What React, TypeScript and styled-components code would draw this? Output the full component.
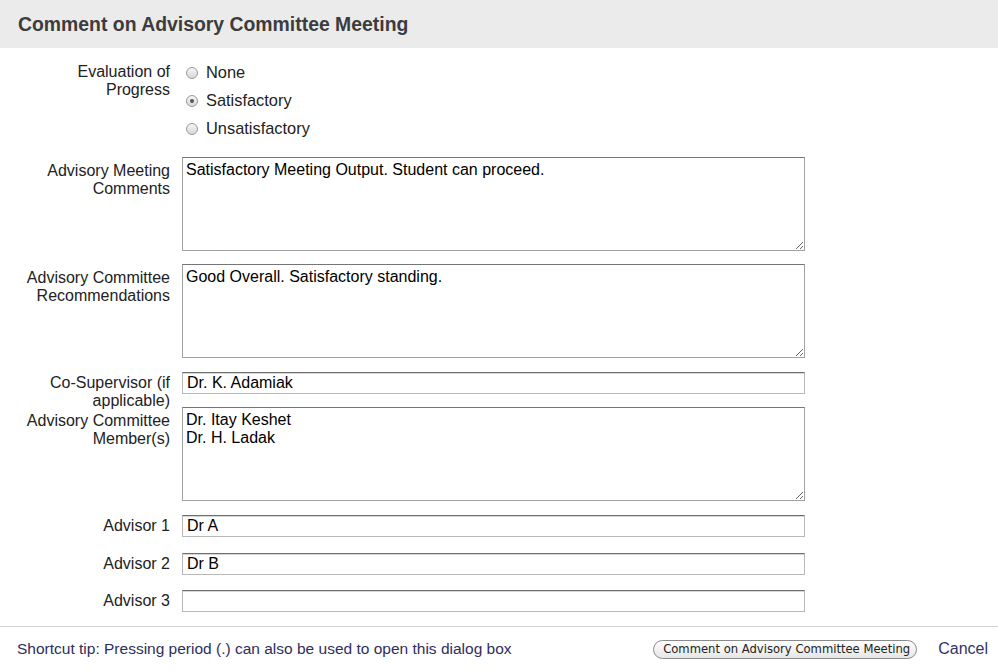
import React from 'react';
import styled, { createGlobalStyle } from 'styled-components';

const GlobalStyle = createGlobalStyle`
  html, body {
    margin: 0;
    padding: 0;
    background: #ffffff;
  }
  body {
    font-family: "Liberation Sans", Arial, Helvetica, sans-serif;
    color: #222;
  }
`;

const Dialog = styled.div`
  width: 998px;
  height: 671px;
  display: flex;
  flex-direction: column;
  background: #fff;
`;

const Header = styled.div`
  height: 48px;
  background: #ebebeb;
  display: flex;
  align-items: center;
  padding-left: 18px;
  flex-shrink: 0;
`;

const Title = styled.h2`
  margin: 0;
  font-size: 19.4px;
  font-weight: bold;
  color: #3c3c3c;
`;

const Form = styled.div`
  flex: 1;
  display: flex;
  flex-direction: column;
  gap: 14px;
  padding-top: 15px;
  padding-left: 20px;
`;

const Row = styled.div<{ $after?: number }>`
  display: grid;
  grid-template-columns: 150px 623px;
  column-gap: 12px;
  align-items: start;
  margin-bottom: ${p => p.$after ?? 0}px;
`;

const Label = styled.label<{ $top?: number; $spill?: number }>`
  text-align: right;
  font-size: 16px;
  line-height: 18px;
  color: #222;
  padding-top: ${p => p.$top ?? 0}px;
  margin-bottom: ${p => -(p.$spill ?? 0)}px;
`;

const RadioGroup = styled.div`
  display: flex;
  flex-direction: column;
  gap: 10px;
`;

const RadioOption = styled.label`
  display: flex;
  align-items: center;
  font-size: 16.4px;
  line-height: 18px;
  color: #222;
`;

const RadioDot = styled.span<{ $checked?: boolean }>`
  width: 10px;
  height: 10px;
  border-radius: 50%;
  border: 1px solid #9a9a9a;
  background: linear-gradient(#f4f4f4, #d8d8d8);
  margin: 2px 8px 0 4px;
  display: flex;
  align-items: center;
  justify-content: center;

  &::after {
    content: '';
    display: ${p => (p.$checked ? 'block' : 'none')};
    width: 4px;
    height: 4px;
    border-radius: 50%;
    background: #555;
  }
`;

const TextArea = styled.textarea`
  box-sizing: border-box;
  width: 623px;
  height: 94px;
  margin: 0;
  padding: 3px;
  border: 1px solid #a2a2a2;
  border-top-color: #757575;
  font-family: "Liberation Sans", Arial, Helvetica, sans-serif;
  font-size: 16px;
  line-height: 18px;
  color: #000;
  background: #fff;
  outline: none;
`;

const TextInput = styled.input`
  box-sizing: border-box;
  width: 623px;
  height: 22px;
  margin: 0;
  padding: 0 4px;
  border: 1px solid #b8b8b8;
  border-top-color: #6f6f6f;
  box-shadow: inset 0 1px 0 #d6d6d6;
  font-family: "Liberation Sans", Arial, Helvetica, sans-serif;
  font-size: 16px;
  color: #000;
  background: #fff;
  outline: none;
`;

const Footer = styled.div`
  height: 44px;
  border-top: 1px solid #d2d2d2;
  display: flex;
  align-items: center;
  padding: 0 10px 0 17px;
  flex-shrink: 0;
`;

const Tip = styled.div`
  flex: 1;
  font-size: 15.5px;
  color: #2e2e5c;
`;

const Button = styled.button`
  height: 19px;
  padding: 0 6px 0 9px;
  margin-right: 21px;
  border: 1px solid #8a8a8a;
  border-radius: 10px;
  background: linear-gradient(#ffffff, #e6e6e6);
  font-family: "DejaVu Sans", "Lucida Grande", sans-serif;
  font-size: 11.6px;
  color: #222;
  line-height: 17px;
`;

const CancelLink = styled.a`
  font-size: 16px;
  color: #333366;
  text-decoration: none;
`;

const App = () => {
  return (
    <Dialog>
      <GlobalStyle />
      <Header>
        <Title>Comment on Advisory Committee Meeting</Title>
      </Header>

      <Form>
        <Row $after={6}>
          <Label>Evaluation of Progress</Label>
          <RadioGroup>
            <RadioOption><RadioDot />None</RadioOption>
            <RadioOption><RadioDot $checked />Satisfactory</RadioOption>
            <RadioOption><RadioDot />Unsatisfactory</RadioOption>
          </RadioGroup>
        </Row>

        <Row $after={-1}>
          <Label $top={5}>Advisory Meeting Comments</Label>
          <TextArea defaultValue="Satisfactory Meeting Output. Student can proceed." />
        </Row>

        <Row>
          <Label $top={5}>Advisory Committee Recommendations</Label>
          <TextArea defaultValue="Good Overall. Satisfactory standing." />
        </Row>

        <Row $after={-1}>
          <Label $top={2} $spill={18}>Co-Supervisor (if applicable)</Label>
          <TextInput defaultValue="Dr. K. Adamiak" />
        </Row>

        <Row>
          <Label $top={5}>Advisory Committee Member(s)</Label>
          <TextArea defaultValue={'Dr. Itay Keshet\nDr. H. Ladak'} />
        </Row>

        <Row $after={2}>
          <Label $top={2}>Advisor 1</Label>
          <TextInput defaultValue="Dr A" />
        </Row>

        <Row $after={1}>
          <Label $top={2}>Advisor 2</Label>
          <TextInput defaultValue="Dr B" />
        </Row>

        <Row>
          <Label $top={2}>Advisor 3</Label>
          <TextInput defaultValue="" />
        </Row>
      </Form>

      <Footer>
        <Tip>Shortcut tip: Pressing period (.) can also be used to open this dialog box</Tip>
        <Button>Comment on Advisory Committee Meeting</Button>
        <CancelLink href="#">Cancel</CancelLink>
      </Footer>
    </Dialog>
  );
};

export default App;
